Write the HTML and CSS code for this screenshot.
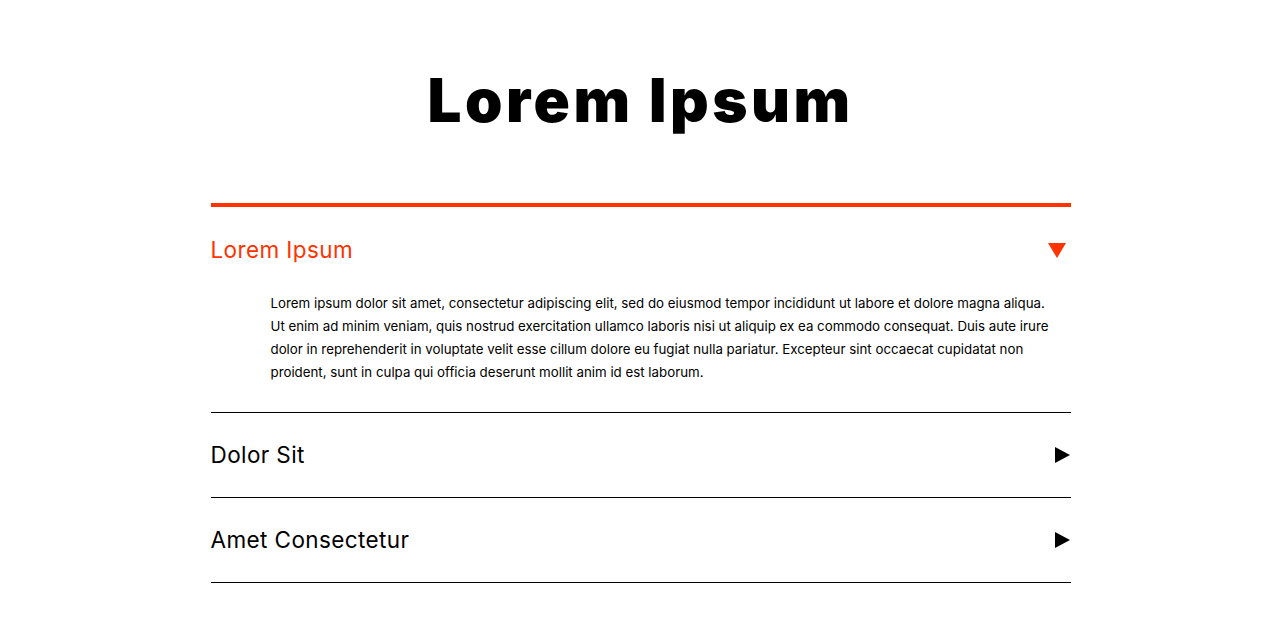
FILE: index.html
```html
<!DOCTYPE html>
<html lang="en">
<head>
<meta charset="utf-8">
<title>Lorem Ipsum</title>
<link rel="stylesheet" href="styles.css">
</head>
<body>
<main class="page">
  <h1 class="title">Lorem Ipsum</h1>
  <section class="accordion">
    <div class="item item-open">
      <div class="item-head">
        <span class="item-title">Lorem Ipsum</span>
        <svg class="arrow arrow-down" width="18" height="15" viewBox="0 0 18 15"><polygon points="0,0 18,0 9,15" fill="#ff3300"/></svg>
      </div>
      <p class="item-body">Lorem ipsum dolor sit amet, consectetur adipiscing elit, sed do eiusmod tempor incididunt ut labore et dolore magna aliqua. Ut enim ad minim veniam, quis nostrud exercitation ullamco laboris nisi ut aliquip ex ea commodo consequat. Duis aute irure dolor in reprehenderit in voluptate velit esse cillum dolore eu fugiat nulla pariatur. Excepteur sint occaecat cupidatat non proident, sunt in culpa qui officia deserunt mollit anim id est laborum.</p>
    </div>
    <div class="item">
      <div class="item-head">
        <span class="item-title">Dolor Sit</span>
        <svg class="arrow" width="15" height="16" viewBox="0 0 15 16"><polygon points="0,0 15,8 0,16" fill="#000"/></svg>
      </div>
    </div>
    <div class="item">
      <div class="item-head">
        <span class="item-title">Amet Consectetur</span>
        <svg class="arrow" width="15" height="16" viewBox="0 0 15 16"><polygon points="0,0 15,8 0,16" fill="#000"/></svg>
      </div>
    </div>
  </section>
</main>
</body>
</html>
```
FILE: styles.css
```css
html, body {
  margin: 0;
  padding: 0;
  background: #fff;
}
body {
  font-family: "Inter", "Liberation Sans", sans-serif;
  color: #000;
}
.page {
  width: 860px;
  margin-left: calc(50% - 429px);
  padding-top: 62px;
}
.title {
  margin: 0;
  text-align: center;
  font-size: 60px;
  line-height: 76px;
  font-weight: 900;
  letter-spacing: 3.5px;
}
.accordion {
  margin-top: 65px;
  border-bottom: 1px solid #000;
}
.item {
  border-top: 1px solid #000;
}
.item-open {
  border-top: 4px solid #ff3300;
}
.item-head {
  display: flex;
  align-items: center;
  justify-content: space-between;
  height: 84px;
  padding-right: 1px;
}
.item-open .item-head {
  height: 86px;
  padding-right: 5px;
}
.item-title {
  font-size: 22.5px;
  line-height: 30px;
  font-weight: 400;
  letter-spacing: 0.4px;
}
.item-open .item-title {
  color: #ff3300;
}
.item-body {
  margin: -1px 0 0 60px;
  padding: 0 20px 28px 0;
  font-size: 13.3px;
  line-height: 23px;
}
```
